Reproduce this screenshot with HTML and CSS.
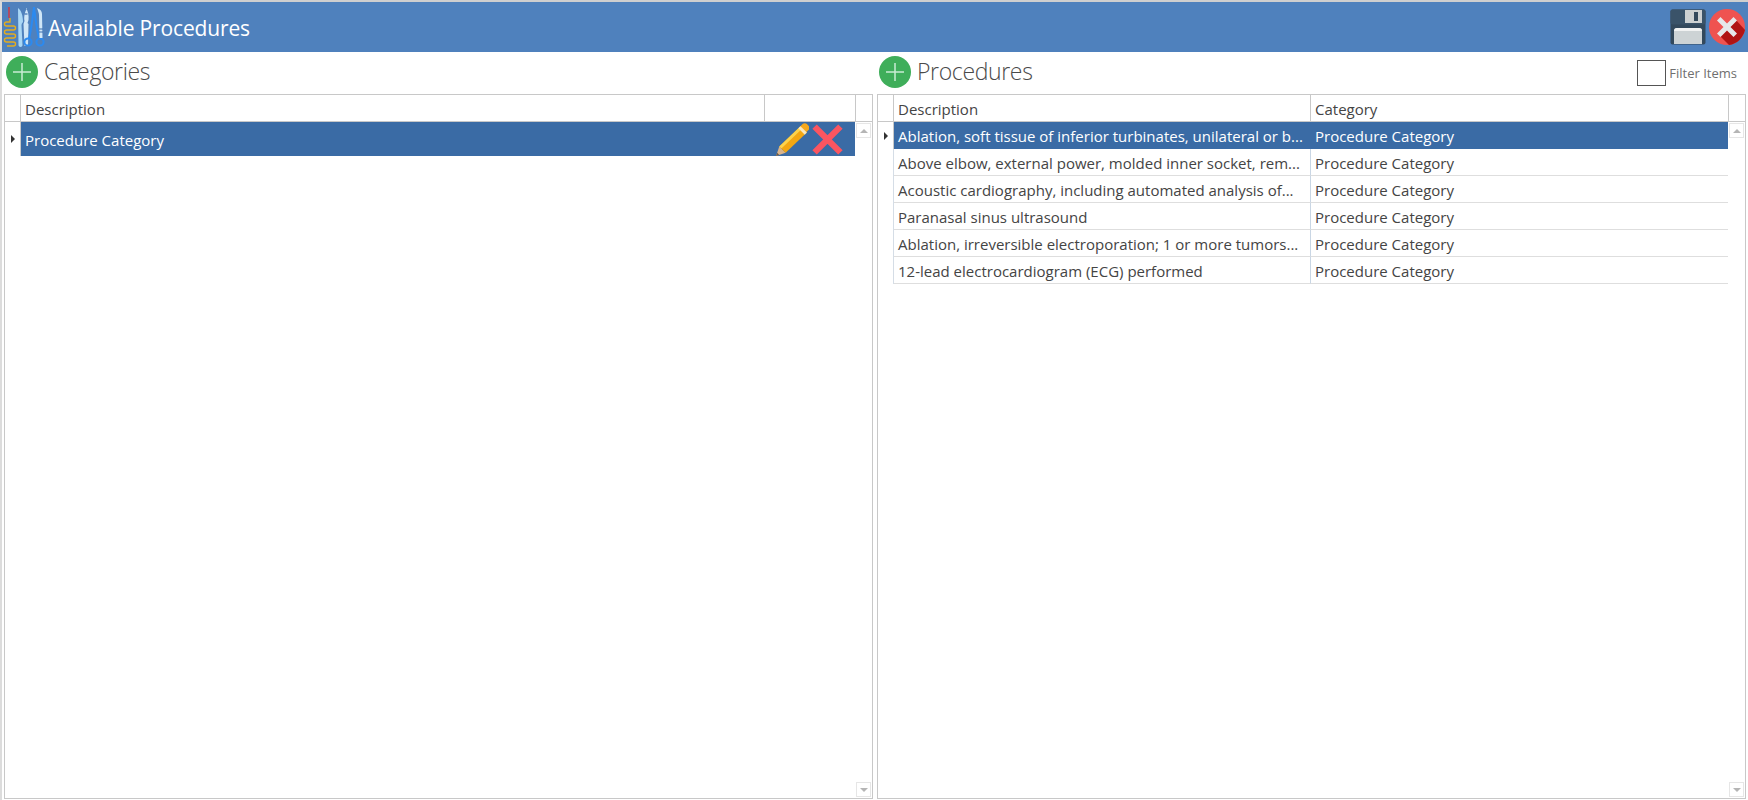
FILE: index.html
```html
<!DOCTYPE html>
<html lang="en">
<head>
<meta charset="utf-8">
<title>Available Procedures</title>
<link rel="stylesheet" href="styles.css">
</head>
<body>
<div class="app">
  <header class="titlebar">
    <svg class="logo" width="42" height="44" viewBox="0 0 42 44">
      <path d="M6 2v11" stroke="#d9363e" stroke-width="1.400" fill="none"/>
      <path d="M7 13V17H3.500a2 2 0 0 0 0 4H10.500a2 2 0 0 1 0 4H3.500a2 2 0 0 0 0 4H10.500a2 2 0 0 1 0 4H3.500a2 2 0 0 0 0 4H10.500a2 2 0 0 1 0 4H4" stroke="#e6ad1e" stroke-width="1.400" fill="none"/>
      <path d="M15 3c3 2 5 7 5 14-1 1-1.500 2-1.500 3L19.500 40c0 2.500-4 2.500-4 0z" fill="#a9d7f5"/>
      <path d="M23 3c2 3 3 7 2.500 12l-1 3 1 1-.5 22h-3.500l-1-22 1-3c-1-5 1-10 2.500-13z" fill="#cfe6f7"/>
      <path d="M21.500 9h3" stroke="#3b6fb0" stroke-width="1.200"/>
      <path d="M31 2c-1 8-2 18-5 32M31 2c1 8 2 18 5 32" stroke="#2b8af0" stroke-width="2" fill="none"/>
      <circle cx="25" cy="37" r="3.600" stroke="#2b8af0" stroke-width="2" fill="none"/>
      <circle cx="37" cy="37" r="3.600" stroke="#2b8af0" stroke-width="2" fill="none"/>
      <path d="M34 3c3 1 5 3 5 6l.5 24h-3l-.5-23c0-2-1-4-2-7z" fill="#cfe6f7"/>
      <path d="M36 24h4M36 27h4" stroke="#3b6fb0" stroke-width="1"/>
    </svg>
    <h1 class="title">Available Procedures</h1>
    <div class="title-actions">
      <svg width="36" height="36" viewBox="0 0 36 36">
        <rect x="0.500" y="0.500" width="35" height="35" rx="2" fill="#33495c"/>
        <rect x="0.500" y="0.500" width="35" height="15" rx="2" fill="#3a5369"/>
        <rect x="15" y="1" width="17" height="13" fill="#cdd1d2"/>
        <rect x="24" y="3" width="4" height="9" fill="#33495c"/>
        <path d="M4 35V22c0-2 1-3 3-3h22c2 0 3 1 3 3v13z" fill="#cdd3d5"/>
        <path d="M4 22c0-2 1-3 3-3h22c2 0 3 1 3 3z" fill="#f1f2f2"/>
      </svg>
      <svg width="36" height="36" viewBox="0 0 36 36">
        <circle cx="18" cy="18" r="18" fill="#ef5350"/>
        <path d="M9 25 20 36c8-1 14-7 16-15L27 11z" fill="#b01414"/>
        <path d="M11.500 8 18 14.500 24.500 8 28 11.500 21.500 18 28 24.500 24.500 28 18 21.500 11.500 28 8 24.500 14.500 18 8 11.500z" fill="#e6e8ea"/>
      </svg>
    </div>
  </header>
  <main class="panels">
    <section class="panel">
      <div class="panel-head">
        <svg class="add" width="32" height="32" viewBox="0 0 32 32"><circle cx="16" cy="16" r="16" fill="#3fae5a"/><path d="M16 7v18M7 16h18" stroke="#c9ecd3" stroke-width="1.500"/></svg>
        <h2 class="panel-title">Categories</h2>
      </div>
      <div class="grid">
        <div class="grid-head">
          <div class="rh"></div>
          <div class="hc c-fill">Description</div>
          <div class="hc c-act"></div>
          <div class="hc c-scroll"></div>
        </div>
        <div class="grid-body">
          <div class="rows">
            <div class="row row-cat selected">
              <div class="rh"><span class="arrow"></span></div>
              <div class="cell c-fill">Procedure Category</div>
              <div class="row-actions">
                <svg width="34" height="34" viewBox="0 0 32 32">
                  <path d="M1 31 4 22 10 28z" fill="#d9b48c"/>
                  <path d="M1 31 2 28 4 30z" fill="#6b5a4a"/>
                  <path d="M4 22 24 3 30 9 10 28z" fill="#f3a712"/>
                  <path d="M4 22 24 3 26 5 6 24z" fill="#fcd34d"/>
                  <path d="M23 4 26 1c1-1 3-1 4 0l2 2c1 1 1 2 0 3l-3 3z" fill="#f6a81c"/>
                  <path d="M22 5 24 3 30 9 28 11z" fill="#f7e6bd"/>
                </svg>
                <svg width="31" height="31" viewBox="0 0 30 30"><path d="M2.500 2.500 27.500 27.500M27.500 2.500 2.500 27.500" stroke="#fb5560" stroke-width="6"/></svg>
              </div>
            </div>
          </div>
          <div class="scrollbar"><span class="sb-btn"><i class="up"></i></span><span class="sb-btn"><i class="down"></i></span></div>
        </div>
      </div>
    </section>
    <section class="panel">
      <div class="panel-head">
        <svg class="add" width="32" height="32" viewBox="0 0 32 32"><circle cx="16" cy="16" r="16" fill="#3fae5a"/><path d="M16 7v18M7 16h18" stroke="#c9ecd3" stroke-width="1.500"/></svg>
        <h2 class="panel-title">Procedures</h2>
        <label class="filter"><span class="check"></span><span>Filter Items</span></label>
      </div>
      <div class="grid">
        <div class="grid-head">
          <div class="rh"></div>
          <div class="hc c-desc">Description</div>
          <div class="hc c-fill">Category</div>
          <div class="hc c-scroll"></div>
        </div>
        <div class="grid-body">
          <div class="rows">
            <div class="row selected">
              <div class="rh"><span class="arrow"></span></div>
              <div class="cell c-desc">Ablation, soft tissue of inferior turbinates, unilateral or b...</div>
              <div class="cell c-fill">Procedure Category</div>
            </div>
            <div class="row">
              <div class="rh"></div>
              <div class="cell c-desc">Above elbow, external power, molded inner socket, rem...</div>
              <div class="cell c-fill">Procedure Category</div>
            </div>
            <div class="row">
              <div class="rh"></div>
              <div class="cell c-desc">Acoustic cardiography, including automated analysis of...</div>
              <div class="cell c-fill">Procedure Category</div>
            </div>
            <div class="row">
              <div class="rh"></div>
              <div class="cell c-desc">Paranasal sinus ultrasound</div>
              <div class="cell c-fill">Procedure Category</div>
            </div>
            <div class="row">
              <div class="rh"></div>
              <div class="cell c-desc">Ablation, irreversible electroporation; 1 or more tumors...</div>
              <div class="cell c-fill">Procedure Category</div>
            </div>
            <div class="row">
              <div class="rh"></div>
              <div class="cell c-desc">12-lead electrocardiogram (ECG) performed</div>
              <div class="cell c-fill">Procedure Category</div>
            </div>
          </div>
          <div class="scrollbar"><span class="sb-btn"><i class="up"></i></span><span class="sb-btn"><i class="down"></i></span></div>
        </div>
      </div>
    </section>
  </main>
</div>
</body>
</html>
```

FILE: styles.css
```css
* { box-sizing: border-box; }
html, body { margin: 0; padding: 0; background: #fff; }
body { font-family: "Open Sans", "Noto Sans", "Liberation Sans", sans-serif; color: #444; overflow: hidden; }
.app { width: 1748px; height: 800px; display: flex; flex-direction: column; border-top: 2px solid #cfcfcf; border-left: 2px solid #dcdcdc; }
.titlebar { height: 50px; flex: none; background: #4f81bd; display: flex; align-items: center; padding: 0 3px 0 1px; }
.logo { flex: none; margin-right: 3px; }
.title { margin: 0; padding-top: 1px; font-size: 21px; font-weight: 400; color: #fff; letter-spacing: -0.15px; }
.title-actions { margin-left: auto; display: flex; gap: 3px; align-items: center; }
.panels { flex: 1; display: grid; grid-template-columns: 869px 869px; gap: 4px; padding: 0 0 1px 2px; min-height: 0; }
.panel { display: flex; flex-direction: column; min-height: 0; }
.panel-head { height: 42px; flex: none; display: flex; align-items: center; padding-left: 2px; }
.add { flex: none; margin: 0 6px 2px 0; }
.panel-title { margin: 0 0 4px; font-size: 23px; font-weight: 300; color: #4a4a4a; letter-spacing: -0.35px; }
.filter { margin-left: auto; display: flex; align-items: center; gap: 3px; font-size: 13px; color: #6f6f6f; padding-right: 9px; }
.check { width: 29px; height: 26px; border: 1px solid #555; background: #fff; }
.grid { flex: 1; min-height: 0; border: 1px solid #c8c8c8; display: flex; flex-direction: column; }
.grid-head { height: 27px; flex: none; display: flex; border-bottom: 1px solid #c8c8c8; }
.rh { width: 16px; flex: none; display: flex; align-items: center; justify-content: center; border-right: 1px solid #d5dde6; }
.grid-head .rh, .selected .rh { border-right-color: #c8c8c8; }
.hc { display: flex; align-items: center; padding: 1px 0 0 4px; font-size: 15px; color: #444; white-space: nowrap; }
.hc + .hc { border-left: 1px solid #c8c8c8; }
.c-fill { flex: 1; min-width: 0; }
.c-act { width: 91px; flex: none; }
.c-desc { width: 416px; flex: none; }
.c-scroll { width: 17px; flex: none; }
.grid-body { flex: 1; min-height: 0; display: flex; }
.rows { flex: 1; min-width: 0; }
.row { height: 27px; display: flex; }
.row-cat { height: 34px; }
.cell { display: flex; align-items: center; padding: 1px 0 0 4px; font-size: 15px; white-space: nowrap; overflow: hidden; border-bottom: 1px solid #dedede; }
.cell + .cell { border-left: 1px solid #c9d6e4; }
.row-cat .cell { padding-top: 3px; }
.row.selected .cell, .row.selected .row-actions { background: #3a6ba5; color: #fff; border-color: #3a6ba5; }
.row-actions { display: flex; align-items: center; gap: 3px; padding: 1px 12px 0 0; flex: none; }
.arrow { width: 0; height: 0; border-left: 4px solid #333; border-top: 4px solid transparent; border-bottom: 4px solid transparent; }
.scrollbar { width: 17px; flex: none; display: flex; flex-direction: column; justify-content: space-between; align-items: flex-end; padding: 1px 1px 1px 0; }
.sb-btn { width: 15px; height: 15px; border: 1px solid #e6e6e6; display: flex; align-items: center; justify-content: center; }
.sb-btn i { width: 0; height: 0; border-left: 4px solid transparent; border-right: 4px solid transparent; }
.sb-btn .up { border-bottom: 4px solid #b5b5b5; }
.sb-btn .down { border-top: 4px solid #b5b5b5; }
```
